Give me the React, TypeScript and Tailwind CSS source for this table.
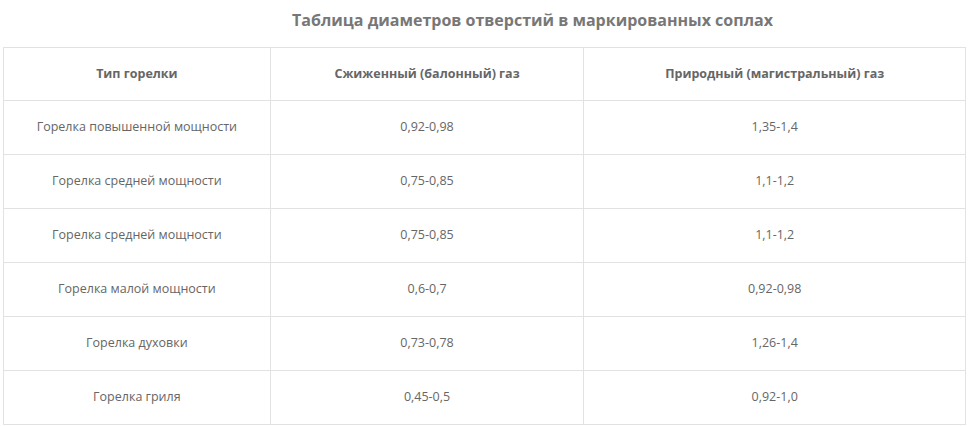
import React from "react";

const rows: [string, string, string][] = [
  ["Горелка повышенной мощности", "0,92-0,98", "1,35-1,4"],
  ["Горелка средней мощности", "0,75-0,85", "1,1-1,2"],
  ["Горелка средней мощности", "0,75-0,85", "1,1-1,2"],
  ["Горелка малой мощности", "0,6-0,7", "0,92-0,98"],
  ["Горелка духовки", "0,73-0,78", "1,26-1,4"],
  ["Горелка гриля", "0,45-0,5", "0,92-1,0"],
];

export default function App() {
  return (
    <div
      className="w-[973px] h-[426px] bg-white overflow-hidden"
      style={{ fontFamily: '"Open Sans", sans-serif' }}
    >
      <div className="pl-[92px] pt-[8px] h-[47px] text-center text-[16px] font-bold text-[#777777] leading-[24px]">
        Таблица диаметров отверстий в маркированных соплах
      </div>
      <table className="ml-[3px] w-[963px] border-collapse text-[12.5px] text-[#666666]">
        <colgroup>
          <col className="w-[267px]" />
          <col className="w-[314px]" />
          <col className="w-[382px]" />
        </colgroup>
        <thead>
          <tr className="h-[53px]">
            <th className="border border-[#e2e2e2] font-bold text-[#666666] text-center">Тип горелки</th>
            <th className="border border-[#e2e2e2] font-bold text-[#666666] text-center">Сжиженный (балонный) газ</th>
            <th className="border border-[#e2e2e2] font-bold text-[#666666] text-center">Природный (магистральный) газ</th>
          </tr>
        </thead>
        <tbody>
          {rows.map((r, i) => (
            <tr key={i} className="h-[54px]">
              <td className="border border-[#e2e2e2] text-center">{r[0]}</td>
              <td className="border border-[#e2e2e2] text-center">{r[1]}</td>
              <td className="border border-[#e2e2e2] text-center">{r[2]}</td>
            </tr>
          ))}
        </tbody>
      </table>
    </div>
  );
}
